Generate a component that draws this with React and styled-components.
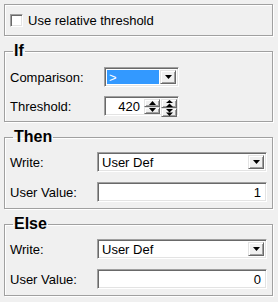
import React from 'react';
import styled, { createGlobalStyle, css } from 'styled-components';

const Global = createGlobalStyle`
  html, body { margin: 0; padding: 0; background: #f0f0f0; }
  body {
    font-family: "Liberation Sans", Arial, sans-serif;
    font-size: 13px;
    color: #000;
  }
`;

const etched = css`
  border: 1px solid #a0a0a0;
  box-shadow: inset 1px 1px 0 #fff, 1px 1px 0 #fff;
`;

const sunken = css`
  box-sizing: border-box;
  border: 1px solid;
  border-color: #a0a0a0 #fff #fff #a0a0a0;
  box-shadow: inset 1px 1px 0 #696969, inset -1px -1px 0 #e3e3e3;
  background: #fff;
`;

const raised = css`
  box-sizing: border-box;
  background: #f0f0f0;
  border: 1px solid;
  border-color: #e3e3e3 #696969 #696969 #e3e3e3;
  box-shadow: inset 1px 1px 0 #fff, inset -1px -1px 0 #a0a0a0;
`;

const Page = styled.div`
  width: 278px;
  height: 302px;
  box-sizing: border-box;
  padding: 4px 5px 0 4px;
  display: flex;
  flex-direction: column;
  gap: 6px;
`;

const TopBox = styled.div`
  ${etched};
  height: 32px;
  box-sizing: border-box;
  padding: 0 5px;
  display: flex;
  align-items: center;
  gap: 5px;
`;

const CheckBox = styled.span`
  ${sunken};
  width: 13px;
  height: 13px;
  display: inline-block;
`;

const Group = styled.fieldset`
  ${etched};
  margin: 0;
  padding: 0 5px ${p => p.$bottom}px 5px;
  min-width: 0;
`;

const Legend = styled.legend`
  font-size: 16px;
  font-weight: bold;
  line-height: 18px;
  padding: 0 1px;
  margin-left: 3px;
`;

const Rows = styled.div`
  display: grid;
  grid-template-columns: ${p => p.$label}px ${p => p.$control};
  row-gap: ${p => p.$gap}px;
  align-items: center;
  padding-top: ${p => p.$top}px;
`;

const Label = styled.span`
  line-height: 15px;
`;

const Combo = styled.div`
  ${sunken};
  height: 20px;
  display: flex;
  align-items: stretch;
  padding: 2px;
`;

const ComboText = styled.div`
  flex: 1;
  display: flex;
  align-items: center;
  padding-left: 2px;
  margin-right: 1px;
  background: ${p => (p.$selected ? '#3399ff' : 'transparent')};
  color: ${p => (p.$selected ? '#fff' : '#000')};
`;

const DropButton = styled.div`
  ${raised};
  width: 16px;
  display: flex;
  align-items: center;
  justify-content: center;
`;

const ValueField = styled.div`
  ${sunken};
  height: 20px;
  display: flex;
  align-items: center;
  justify-content: flex-end;
  padding-right: 5px;
`;

const Spin = styled.div`
  ${sunken};
  height: 20px;
  display: flex;
  align-items: stretch;
  padding: 2px 1px 1px 2px;
  gap: 1px;
`;

const SpinValue = styled.div`
  flex: 1;
  display: flex;
  align-items: center;
  justify-content: flex-end;
  padding-right: 3px;
`;

const SpinColumn = styled.div`
  width: 16px;
  display: flex;
  flex-direction: column;
`;

const SpinHalf = styled.div`
  ${raised};
  flex: 1;
  display: flex;
  align-items: center;
  justify-content: center;
`;

const Arrow = ({ dir = 'down', double = false }) => {
  const up = dir === 'up';
  if (double) {
    return (
      <svg width="7" height="7" viewBox="0 0 7 7">
        {up ? (
          <>
            <polygon points="0,3 3.5,0 7,3" fill="#000" />
            <polygon points="0,7 3.5,3.5 7,7" fill="#000" />
          </>
        ) : (
          <>
            <polygon points="0,0 7,0 3.5,3.5" fill="#000" />
            <polygon points="0,3.5 7,3.5 3.5,7" fill="#000" />
          </>
        )}
      </svg>
    );
  }
  return (
    <svg width="7" height="4" viewBox="0 0 7 4">
      {up ? (
        <polygon points="0,4 3.5,0 7,4" fill="#000" />
      ) : (
        <polygon points="0,0 7,0 3.5,4" fill="#000" />
      )}
    </svg>
  );
};

const Dropdown = ({ value, selected }) => (
  <Combo>
    <ComboText $selected={selected}>{value}</ComboText>
    <DropButton>
      <Arrow dir="down" />
    </DropButton>
  </Combo>
);

const SpinBox = ({ value }) => (
  <Spin>
    <SpinValue>{value}</SpinValue>
    <SpinColumn>
      <SpinHalf><Arrow dir="up" /></SpinHalf>
      <SpinHalf><Arrow dir="down" /></SpinHalf>
    </SpinColumn>
    <SpinColumn>
      <SpinHalf><Arrow dir="up" double /></SpinHalf>
      <SpinHalf><Arrow dir="down" double /></SpinHalf>
    </SpinColumn>
  </Spin>
);

const WriteGroup = ({ title, value }) => (
  <Group $bottom={6}>
    <Legend>{title}</Legend>
    <Rows $label={87} $control="170px" $gap={10} $top={6}>
      <Label>Write:</Label>
      <Dropdown value="User Def" />
      <Label>User Value:</Label>
      <ValueField>{value}</ValueField>
    </Rows>
  </Group>
);

export default function App() {
  return (
    <>
      <Global />
      <Page>
        <TopBox>
          <CheckBox />
          <span>Use relative threshold</span>
        </TopBox>
        <Group $bottom={5}>
          <Legend>If</Legend>
          <Rows $label={94} $control="75px" $gap={9} $top={7}>
            <Label>Comparison:</Label>
            <Dropdown value=">" selected />
            <Label>Threshold:</Label>
            <SpinBox value="420" />
          </Rows>
        </Group>
        <WriteGroup title="Then" value="1" />
        <WriteGroup title="Else" value="0" />
      </Page>
    </>
  );
}
